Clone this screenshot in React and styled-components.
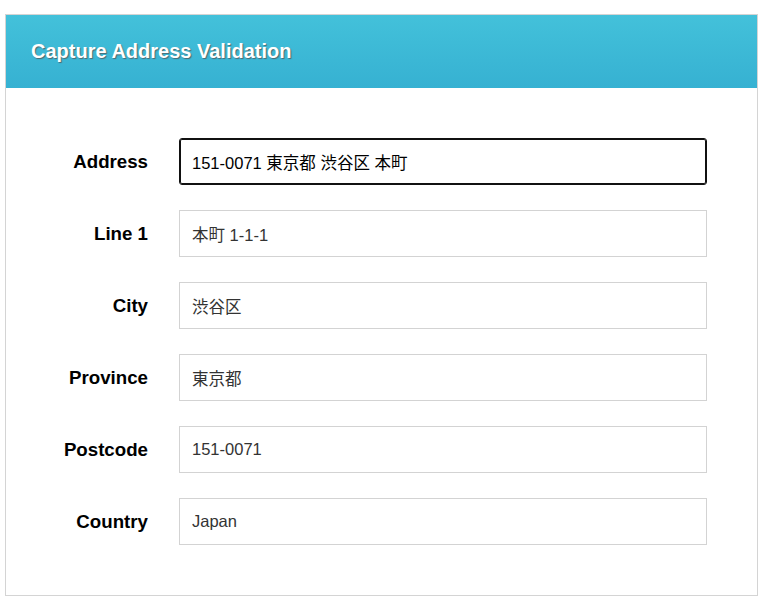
import React from "react";
import styled, { createGlobalStyle, css } from "styled-components";

const GlobalStyle = createGlobalStyle`
  html, body {
    margin: 0;
    padding: 0;
    background: #fff;
    font-family: "Liberation Sans", Arial, "Noto Sans CJK JP", sans-serif;
  }
`;

const Panel = styled.div`
  width: 753px;
  margin: 14px 0 0 5px;
  box-sizing: border-box;
  border: 1px solid #d4d4d4;
  background: #fff;
`;

const Header = styled.div`
  height: 73px;
  display: flex;
  align-items: center;
  padding: 0 25px;
  background: linear-gradient(to bottom, #43c1da, #36b1d2);
`;

const Title = styled.h1`
  margin: 0;
  font-size: 20px;
  font-weight: bold;
  color: #fff;
  text-shadow: 1px 1px 1px rgba(90, 40, 30, 0.55);
`;

const Form = styled.div`
  display: grid;
  grid-template-columns: 92px 1fr;
  column-gap: 31px;
  row-gap: 25px;
  padding: 50px 50px 50px 50px;
`;

const Label = styled.label`
  display: flex;
  align-items: center;
  justify-content: flex-end;
  font-size: 18.7px;
  font-weight: bold;
  color: #000;
`;

const Input = styled.input`
  box-sizing: border-box;
  width: 100%;
  height: 47px;
  padding: 0 12px;
  border: 1px solid #d3d3d3;
  border-radius: 0;
  font-family: "Liberation Sans", Arial, "Noto Sans CJK JP", sans-serif;
  font-size: 16.5px;
  color: #333;
  background: #fff;
  outline: none;

  ${(p) =>
    p.$focused &&
    css`
      border-color: #111;
      border-radius: 3px;
      box-shadow: inset 0 0 0 1px #111;
      color: #000;
    `}
`;

const fields = [
  { label: "Address", value: "151-0071 東京都 渋谷区 本町", focused: true },
  { label: "Line 1", value: "本町 1-1-1" },
  { label: "City", value: "渋谷区" },
  { label: "Province", value: "東京都" },
  { label: "Postcode", value: "151-0071" },
  { label: "Country", value: "Japan" },
];

export default function App() {
  return (
    <>
      <GlobalStyle />
      <Panel>
        <Header>
          <Title>Capture Address Validation</Title>
        </Header>
        <Form>
          {fields.map((f) => (
            <React.Fragment key={f.label}>
              <Label htmlFor={f.label}>{f.label}</Label>
              <Input
                id={f.label}
                defaultValue={f.value}
                $focused={f.focused}
                autoFocus={f.focused}
              />
            </React.Fragment>
          ))}
        </Form>
      </Panel>
    </>
  );
}
